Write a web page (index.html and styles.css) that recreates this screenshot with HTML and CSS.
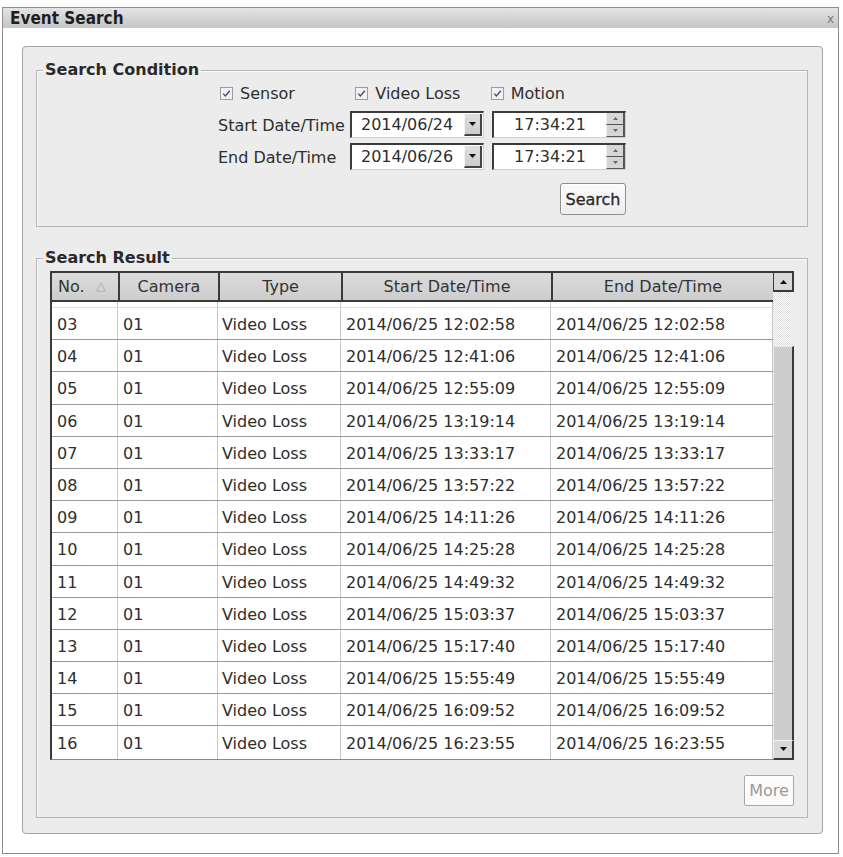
FILE: index.html
```html
<!DOCTYPE html>
<html>
<head>
<meta charset="utf-8">
<title>Event Search</title>
<link rel="stylesheet" href="styles.css">
</head>
<body>
<div class="window">
  <div class="titlebar">
    <span class="title">Event Search</span>
    <span class="close">x</span>
  </div>
  <div class="panel">
    <fieldset class="group group-cond">
      <legend>Search Condition</legend>
      <div class="cond">
        <div class="checks">
          <label class="check"><span class="cbox"><svg width="13" height="13" viewBox="0 0 13 13"><path d="M3.2 6.6 L5.4 9 L9.8 3.8" fill="none" stroke="#4c4c6c" stroke-width="1.4"/></svg></span>Sensor</label>
          <label class="check"><span class="cbox"><svg width="13" height="13" viewBox="0 0 13 13"><path d="M3.2 6.6 L5.4 9 L9.8 3.8" fill="none" stroke="#4c4c6c" stroke-width="1.4"/></svg></span>Video Loss</label>
          <label class="check"><span class="cbox"><svg width="13" height="13" viewBox="0 0 13 13"><path d="M3.2 6.6 L5.4 9 L9.8 3.8" fill="none" stroke="#4c4c6c" stroke-width="1.4"/></svg></span>Motion</label>
        </div>
        <div class="dt-row first">
          <span class="dt-label">Start Date/Time</span>
          <div class="field date"><span class="val">2014/06/24</span><span class="drop"><svg width="7" height="4" viewBox="0 0 7 4"><path d="M0 0 H7 L3.5 4 Z" fill="#111"/></svg></span></div>
          <div class="field time"><span class="val">17:34:21</span><span class="spin"><span class="spin-btn"><svg width="5" height="3" viewBox="0 0 5 3"><path d="M0 3 H5 L2.5 0 Z" fill="#666"/></svg></span><span class="spin-btn"><svg width="5" height="3" viewBox="0 0 5 3"><path d="M0 0 H5 L2.5 3 Z" fill="#666"/></svg></span></span></div>
        </div>
        <div class="dt-row">
          <span class="dt-label">End Date/Time</span>
          <div class="field date"><span class="val">2014/06/26</span><span class="drop"><svg width="7" height="4" viewBox="0 0 7 4"><path d="M0 0 H7 L3.5 4 Z" fill="#111"/></svg></span></div>
          <div class="field time"><span class="val">17:34:21</span><span class="spin"><span class="spin-btn"><svg width="5" height="3" viewBox="0 0 5 3"><path d="M0 3 H5 L2.5 0 Z" fill="#666"/></svg></span><span class="spin-btn"><svg width="5" height="3" viewBox="0 0 5 3"><path d="M0 0 H5 L2.5 3 Z" fill="#666"/></svg></span></span></div>
        </div>
        <div class="btn-row">
          <button class="btn search">Search</button>
        </div>
      </div>
    </fieldset>

    <fieldset class="group group-result">
      <legend>Search Result</legend>
      <div class="grid">
        <div class="table">
          <div class="thead">
            <div class="th th-no">No.<svg class="sort" width="10" height="10" viewBox="0 0 10 10"><path d="M5 0.8 L9.2 9.2 H0.8 Z" fill="none" stroke="#b0b0b0" stroke-width="1"/></svg></div>
            <div class="th">Camera</div>
            <div class="th">Type</div>
            <div class="th">Start Date/Time</div>
            <div class="th">End Date/Time</div>
          </div>
          <div class="tbody">
            <div class="row sliver"><span class="td"></span><span class="td"></span><span class="td"></span><span class="td"></span><span class="td"></span></div>
            <div class="row"><span class="td">03</span><span class="td">01</span><span class="td">Video Loss</span><span class="td">2014/06/25 12:02:58</span><span class="td">2014/06/25 12:02:58</span></div>
            <div class="row"><span class="td">04</span><span class="td">01</span><span class="td">Video Loss</span><span class="td">2014/06/25 12:41:06</span><span class="td">2014/06/25 12:41:06</span></div>
            <div class="row"><span class="td">05</span><span class="td">01</span><span class="td">Video Loss</span><span class="td">2014/06/25 12:55:09</span><span class="td">2014/06/25 12:55:09</span></div>
            <div class="row"><span class="td">06</span><span class="td">01</span><span class="td">Video Loss</span><span class="td">2014/06/25 13:19:14</span><span class="td">2014/06/25 13:19:14</span></div>
            <div class="row"><span class="td">07</span><span class="td">01</span><span class="td">Video Loss</span><span class="td">2014/06/25 13:33:17</span><span class="td">2014/06/25 13:33:17</span></div>
            <div class="row"><span class="td">08</span><span class="td">01</span><span class="td">Video Loss</span><span class="td">2014/06/25 13:57:22</span><span class="td">2014/06/25 13:57:22</span></div>
            <div class="row"><span class="td">09</span><span class="td">01</span><span class="td">Video Loss</span><span class="td">2014/06/25 14:11:26</span><span class="td">2014/06/25 14:11:26</span></div>
            <div class="row"><span class="td">10</span><span class="td">01</span><span class="td">Video Loss</span><span class="td">2014/06/25 14:25:28</span><span class="td">2014/06/25 14:25:28</span></div>
            <div class="row"><span class="td">11</span><span class="td">01</span><span class="td">Video Loss</span><span class="td">2014/06/25 14:49:32</span><span class="td">2014/06/25 14:49:32</span></div>
            <div class="row"><span class="td">12</span><span class="td">01</span><span class="td">Video Loss</span><span class="td">2014/06/25 15:03:37</span><span class="td">2014/06/25 15:03:37</span></div>
            <div class="row"><span class="td">13</span><span class="td">01</span><span class="td">Video Loss</span><span class="td">2014/06/25 15:17:40</span><span class="td">2014/06/25 15:17:40</span></div>
            <div class="row"><span class="td">14</span><span class="td">01</span><span class="td">Video Loss</span><span class="td">2014/06/25 15:55:49</span><span class="td">2014/06/25 15:55:49</span></div>
            <div class="row"><span class="td">15</span><span class="td">01</span><span class="td">Video Loss</span><span class="td">2014/06/25 16:09:52</span><span class="td">2014/06/25 16:09:52</span></div>
            <div class="row"><span class="td">16</span><span class="td">01</span><span class="td">Video Loss</span><span class="td">2014/06/25 16:23:55</span><span class="td">2014/06/25 16:23:55</span></div>
          </div>
        </div>
        <div class="scrollbar">
          <div class="sb-btn up"><svg width="7" height="4" viewBox="0 0 7 4"><path d="M0 4 H7 L3.5 0 Z" fill="#111"/></svg></div>
          <div class="sb-track"></div>
          <div class="sb-thumb"></div>
          <div class="sb-btn down"><svg width="7" height="4" viewBox="0 0 7 4"><path d="M0 0 H7 L3.5 4 Z" fill="#111"/></svg></div>
        </div>
      </div>
      <div class="more-row">
        <button class="btn more">More</button>
      </div>
    </fieldset>
  </div>
</div>
</body>
</html>
```

FILE: styles.css
```css
* { box-sizing: border-box; }

html, body {
  margin: 0;
  padding: 0;
  background: #ffffff;
}

body {
  font-family: "DejaVu Sans", "Liberation Sans", sans-serif;
  font-size: 16px;
  color: #2e2e2e;
}

.window {
  margin: 7px 0 0 2px;
  width: 837px;
  height: 847px;
  border: 1px solid #8e8e8e;
  background: #ffffff;
}

.titlebar {
  height: 20px;
  display: flex;
  align-items: center;
  justify-content: space-between;
  padding: 0 4px 0 7px;
  background: linear-gradient(to bottom, #e4e4e4 0%, #d2d2d2 55%, #c6c6c6 100%);
}

.title {
  font-family: "DejaVu Sans Condensed", "DejaVu Sans", sans-serif;
  font-stretch: condensed;
  font-weight: bold;
  font-size: 17px;
  line-height: 20px;
  color: #1e1e1e;
}

.close {
  font-size: 12px;
  color: #7a7a7a;
  line-height: 20px;
  padding-top: 2px;
}

.panel {
  margin: 18px 0 0 19px;
  width: 801px;
  height: 788px;
  border: 1px solid #a4a4a4;
  border-radius: 4px;
  background: #ececec;
  display: flex;
  flex-direction: column;
}

.group {
  margin: 0 0 0 13px;
  width: 772px;
  padding: 0 0 11px 0;
  border: 1px solid #b6b6b6;
  box-shadow: inset 1px 1px 0 #fafafa;
  min-width: 0;
}

.group-cond { margin-top: 14px; }
.group-result { margin-top: 22px; }

.group legend {
  margin-left: 6px;
  padding: 0 2px;
  font-weight: bold;
  font-size: 16px;
  line-height: 18px;
  color: #2a2a2a;
}

.cond {
  margin-left: 181px;
  width: 408px;
}

.checks {
  display: flex;
  height: 20px;
  margin-top: 4px;
  margin-left: 2px;
}

.check {
  width: 138px;
  display: flex;
  align-items: center;
  gap: 7px;
  line-height: 20px;
  padding-top: 1px;
}

.cbox {
  width: 13px;
  height: 13px;
  border: 1px solid #9a9aac;
  background: #f1f1f5;
  display: flex;
  align-items: center;
  justify-content: center;
}

.cbox svg { display: block; flex: none; }

.dt-row {
  display: grid;
  grid-template-columns: 124px 134px 134px;
  column-gap: 8px;
  height: 27px;
  margin-top: 5px;
  align-items: center;
}

.dt-row.first { margin-top: 8px; }

.dt-label { white-space: nowrap; padding-top: 1px; }

.field {
  height: 27px;
  display: flex;
  align-items: stretch;
  background: #ffffff;
  border-top: 2px solid #3c3c3c;
  border-left: 2px solid #3c3c3c;
  border-right: 1px solid #cfcfcf;
  border-bottom: 1px solid #cfcfcf;
}

.field .val {
  flex: 1;
  display: flex;
  align-items: center;
  line-height: 20px;
}

.date .val { padding-left: 9px; }
.time .val { justify-content: center; }

.drop {
  width: 18px;
  margin: 1px 1px 1px 0;
  background: linear-gradient(#e0e0e0, #cccccc);
  border-right: 2px solid #444;
  border-bottom: 2px solid #444;
  border-left: 1px solid #f4f4f4;
  display: flex;
  align-items: center;
  justify-content: center;
}

.drop svg { display: block; }

.spin {
  width: 19px;
  display: flex;
  flex-direction: column;
}

.spin-btn {
  flex: 1;
  display: flex;
  align-items: center;
  justify-content: center;
  background: #d6d6d6;
  border-right: 2px solid #555;
  border-bottom: 1px solid #555;
  border-left: 1px solid #f0f0f0;
}

.spin-btn svg { display: block; }

.btn-row {
  display: flex;
  justify-content: flex-end;
  margin-top: 13px;
}

.btn {
  font-family: inherit;
  font-size: 16px;
  margin: 0;
  padding: 0;
  border: 1px solid #8e8e8e;
  border-radius: 3px;
  background: linear-gradient(#fbfbfb, #ededed);
  box-shadow: inset 1px 1px 0 #ffffff;
  color: #2a2a2a;
  cursor: default;
}

.search {
  width: 66px;
  height: 32px;
  -webkit-text-stroke: 0.3px #2a2a2a;
}

.grid {
  display: flex;
  margin: 4px 0 0 13px;
}

.table {
  width: 723px;
}

.thead {
  display: grid;
  grid-template-columns: 68px 100px 123px 210px 222px;
  height: 31px;
  border-top: 2px solid #3a3a3a;
  border-left: 2px solid #3a3a3a;
  border-bottom: 2px solid #3a3a3a;
  background: linear-gradient(#dcdcdc, #cdcdcd);
}

.th {
  border-right: 2px solid #3a3a3a;
  display: flex;
  align-items: center;
  justify-content: center;
  line-height: 20px;
  color: #333;
  white-space: nowrap;
  padding-top: 1px;
}

.th-no {
  justify-content: flex-start;
  padding-left: 6px;
  gap: 11px;
}

.th-no svg { display: block; }

.tbody {
  border-left: 2px solid #3a3a3a;
  border-bottom: 1px solid #8c8c8c;
  background: #ffffff;
}

.row {
  display: grid;
  grid-template-columns: 66px 100px 123px 210px 222px;
  height: 32.2px;
  border-bottom: 1px solid #9a9a9a;
}

.row.sliver {
  height: 6px;
  border-bottom: 1px solid #e0e0e0;
}

.row:last-child { border-bottom: none; }

.td {
  border-right: 1px solid #c6c6c6;
  display: flex;
  align-items: center;
  padding: 3px 0 0 5px;
  line-height: 20px;
  white-space: nowrap;
  color: #2e2e2e;
}

.td:nth-child(3) { padding-left: 4px; }

.scrollbar {
  width: 21px;
  display: flex;
  flex-direction: column;
}

.sb-btn {
  height: 21px;
  display: flex;
  align-items: center;
  justify-content: center;
  background: #d8d8d8;
  border: 1px solid #3a3a3a;
  border-right-width: 2px;
  border-bottom-width: 2px;
}

.sb-btn.up { border-top-width: 2px; }
.sb-btn.down { height: 20px; border-top: 1px solid #f0f0f0; border-left-color: #f0f0f0; }

.sb-btn svg { display: block; }

.sb-track {
  height: 54px;
  background-color: #f4f4f4;
  background-image: repeating-conic-gradient(#dcdcdc 0 25%, #ffffff 0 50%);
  background-size: 2px 2px;
}

.sb-thumb {
  flex: 1;
  background: #cdcdcd;
  border-left: 1px solid #ececec;
  border-right: 2px solid #3a3a3a;
  border-top: 1px solid #e8e8e8;
}

.more-row {
  display: flex;
  justify-content: flex-end;
  margin: 15px 13px 0 0;
}

.more {
  width: 50px;
  height: 31px;
  color: #9a9a9a;
  border-color: #a8a8a8;
  border-radius: 2px;
  background: #fbfbfb;
}
```
